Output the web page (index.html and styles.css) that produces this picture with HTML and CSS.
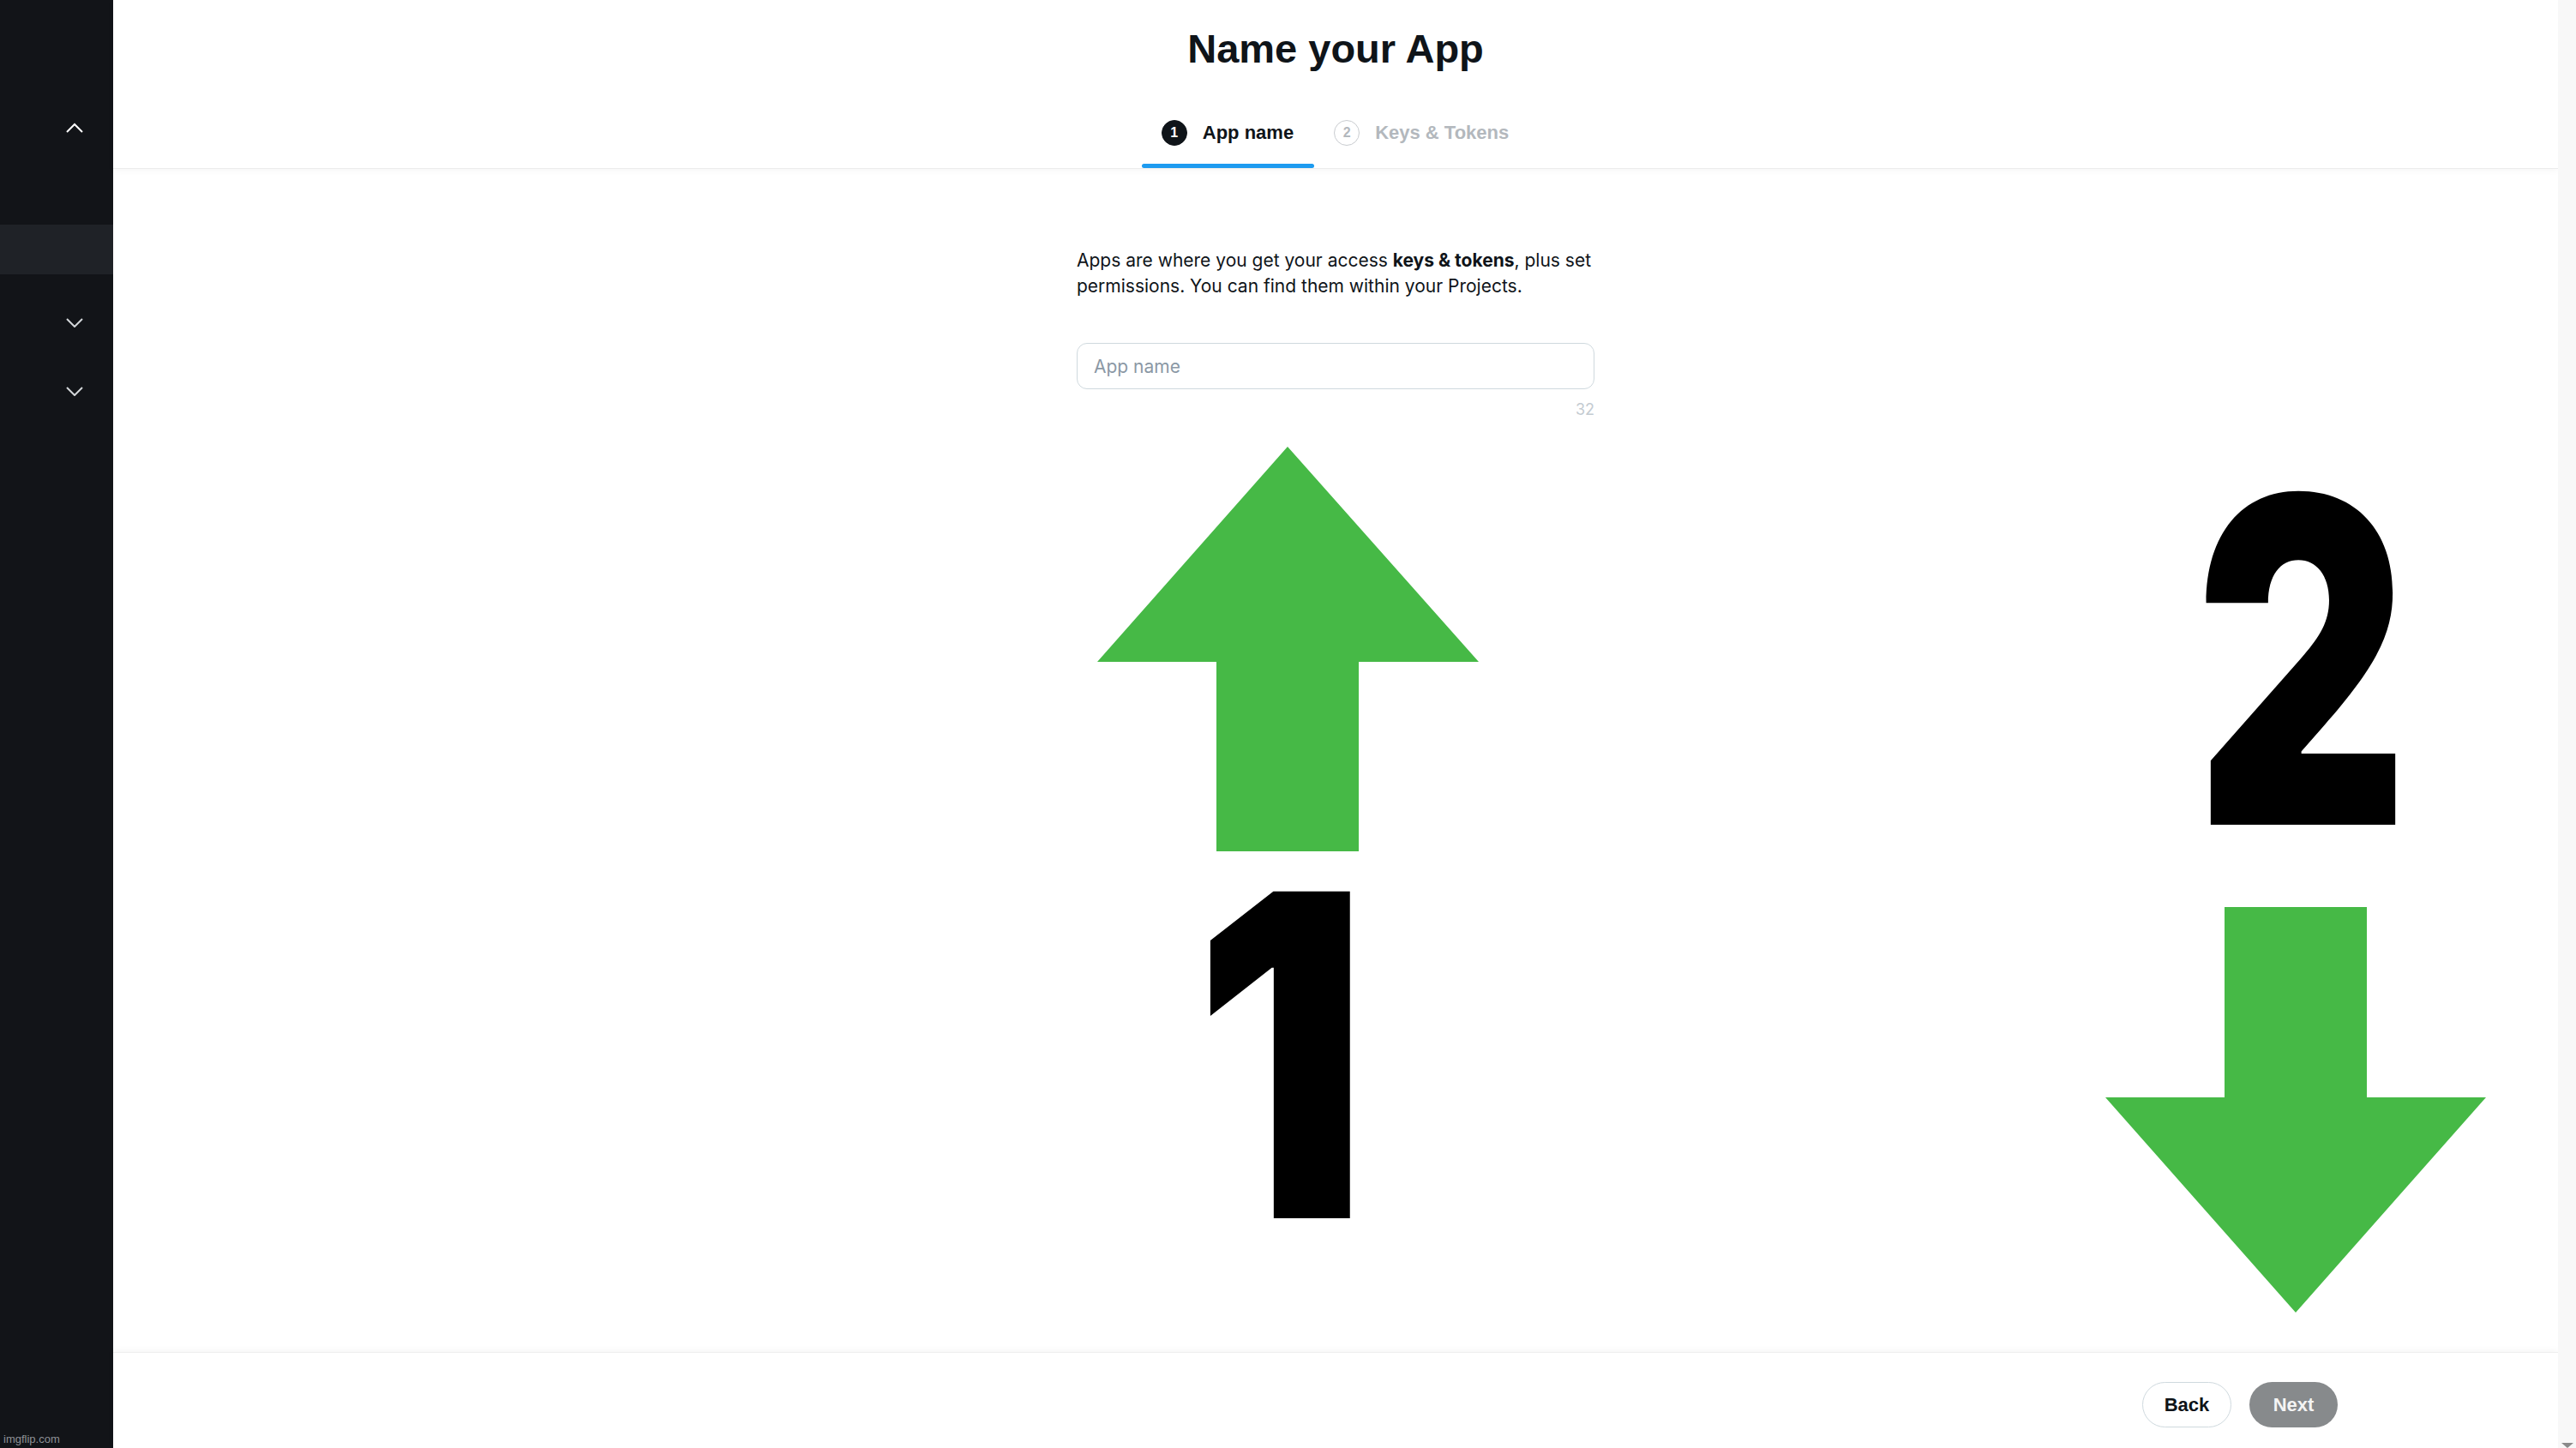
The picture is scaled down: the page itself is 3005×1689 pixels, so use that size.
FILE: index.html
```html
<!DOCTYPE html>
<html lang="en">
<head>
    <meta charset="UTF-8">
    <meta name="viewport" content="width=device-width, initial-scale=1.0">
    <title>Name your App</title>
    <link rel="stylesheet" href="styles.css">
</head>
<body>
    <aside class="sidebar">
        <div class="nav-item nav-item--first">
            <svg class="chevron" viewBox="0 0 22 12" width="22" height="12"><path d="M2 11 L11 2 L20 11"/></svg>
        </div>
        <div class="nav-item nav-item--active"></div>
        <div class="nav-item nav-item--third">
            <svg class="chevron chevron--down" viewBox="0 0 22 12" width="22" height="12"><path d="M2 2 L11 11 L20 2"/></svg>
        </div>
        <div class="nav-item nav-item--fourth">
            <svg class="chevron chevron--down" viewBox="0 0 22 12" width="22" height="12"><path d="M2 2 L11 11 L20 2"/></svg>
        </div>
        <div class="watermark">imgflip.com</div>
    </aside>

    <main class="main">
        <header class="topbar">
            <h1>Name your App</h1>
            <nav class="steps">
                <div class="step step--active">
                    <div class="step-body">
                        <span class="step-num">1</span>
                        <span class="step-label">App name</span>
                    </div>
                    <div class="step-bar"></div>
                </div>
                <div class="step">
                    <div class="step-body">
                        <span class="step-num">2</span>
                        <span class="step-label">Keys &amp; Tokens</span>
                    </div>
                    <div class="step-bar"></div>
                </div>
            </nav>
        </header>

        <section class="content">
            <p class="intro">Apps are where you get your access <b>keys &amp; tokens</b>, plus set<br>permissions. You can find them within your Projects.</p>
            <div class="field">
                <input type="text" placeholder="App name">
                <div class="counter">32</div>
            </div>
        </section>

        <footer class="footer">
            <button class="btn btn-back">Back</button>
            <button class="btn btn-next">Next</button>
        </footer>
    </main>

    <div class="scroll-track">
        <span class="scroll-arrow"></span>
    </div>

    <!-- meme overlay -->
    <svg class="arrow arrow--up" viewBox="0 0 445 472" width="445" height="472">
        <polygon points="222,0 445,251 305,251 305,472 139,472 139,251 0,251"/>
    </svg>
    <div class="digit digit--one">1</div>
    <div class="digit digit--two">2</div>
    <svg class="arrow arrow--down" viewBox="0 0 444 473" width="444" height="473">
        <polygon points="139,0 305,0 305,222 444,222 222,473 0,222 139,222"/>
    </svg>
</body>
</html>
```

FILE: styles.css
```css
body {
    margin: 0;
    height: 100vh;
    display: flex;
    overflow: hidden;
    position: relative;
    background: #fff;
    font-family: Inter, "Noto Sans", sans-serif;
    color: #0f1419;
}
.sidebar {
    width: 132px;
    flex: none;
    background-color: #121418;
    display: flex;
    flex-direction: column;
}
.nav-item {
    height: 58px;
    display: flex;
    align-items: center;
    justify-content: flex-end;
    padding-right: 34px;
}
.nav-item--first {
    margin-top: 120px;
}
.nav-item--active {
    margin-top: 84px;
    background-color: #1f2227;
}
.nav-item--third {
    margin-top: 27px;
}
.nav-item--fourth {
    margin-top: 22px;
}
.chevron path {
    fill: none;
    stroke: #fff;
    stroke-width: 2;
}
.chevron--down path {
    stroke: #d3d6d9;
}
.watermark {
    margin-top: auto;
    padding: 0 0 3px 4px;
    font: 13px "Liberation Sans", Arial, sans-serif;
    color: #8e9196;
}
.main {
    flex: 1;
    display: flex;
    flex-direction: column;
}
.topbar {
    height: 197px;
    box-sizing: border-box;
    border-bottom: 1px solid #ececec;
    box-shadow: 0 2px 8px rgba(0, 0, 0, 0.04);
    display: flex;
    flex-direction: column;
    align-items: center;
}
.topbar h1 {
    margin: 29px 0 0;
    font: 700 47px/56px "Liberation Sans", Arial, sans-serif;
    color: #0f1419;
}
.steps {
    display: flex;
    margin-top: 34px;
}
.step {
    display: flex;
    flex-direction: column;
}
.step-body {
    height: 72px;
    display: flex;
    align-items: center;
    gap: 18px;
    padding: 0 24px 0 23px;
}
.step-num {
    width: 30px;
    height: 30px;
    box-sizing: border-box;
    border-radius: 50%;
    border: 1.5px solid #c9ccd0;
    display: flex;
    align-items: center;
    justify-content: center;
    font: 700 16px "Liberation Sans", Arial, sans-serif;
    color: #b3b8bd;
}
.step-label {
    font: 700 22px "Liberation Sans", Arial, sans-serif;
    color: #b3b8bd;
}
.step-bar {
    height: 5px;
    border-radius: 3px;
}
.step--active .step-num {
    background-color: #0f1419;
    border-color: #0f1419;
    color: #fff;
}
.step--active .step-label {
    color: #0f1419;
}
.step--active .step-bar {
    background-color: #1d9bf0;
}
.content {
    flex: 1;
    display: flex;
    flex-direction: column;
    align-items: center;
}
.intro {
    width: 604px;
    margin: 92px 0 0;
    font-size: 21px;
    line-height: 30px;
    color: #0f1419;
}
.intro b {
    font-weight: 700;
}
.field {
    width: 604px;
    margin-top: 51px;
}
.field input {
    width: 100%;
    height: 54px;
    box-sizing: border-box;
    border: 1px solid #cfd9de;
    border-radius: 12px;
    padding: 0 19px;
    font: 21px Inter, sans-serif;
    color: #0f1419;
    outline: none;
}
.field input::placeholder {
    color: #8b98a5;
}
.counter {
    margin-top: 14px;
    text-align: right;
    font-size: 18px;
    line-height: 20px;
    color: #c4cbd1;
}
.footer {
    height: 112px;
    flex: none;
    box-sizing: border-box;
    border-top: 1px solid #efefef;
    box-shadow: 0 -2px 8px rgba(0, 0, 0, 0.04);
    display: flex;
    justify-content: flex-end;
    align-items: flex-start;
    gap: 21px;
    padding: 34px 257px 0 0;
}
.btn {
    height: 53px;
    border-radius: 27px;
    font: 700 22px "Liberation Sans", Arial, sans-serif;
    cursor: pointer;
}
.btn-back {
    width: 104px;
    background-color: #fff;
    border: 1px solid #cfd9de;
    color: #0f1419;
}
.btn-next {
    width: 103px;
    background-color: #878a8c;
    border: none;
    color: #f4f4f4;
}
.scroll-track {
    width: 21px;
    flex: none;
    background-color: #f8f8f8;
    display: flex;
    flex-direction: column;
    justify-content: flex-end;
    align-items: center;
}
.scroll-arrow {
    width: 0;
    height: 0;
    border-left: 7px solid transparent;
    border-right: 7px solid transparent;
    border-top: 6px solid #8a8a8a;
}
.arrow {
    position: absolute;
}
.arrow polygon {
    fill: #46b946;
}
.arrow--up {
    left: 1280px;
    top: 521px;
}
.arrow--down {
    left: 2456px;
    top: 1058px;
}
.digit {
    position: absolute;
    width: 400px;
    text-align: center;
    font-family: Inter, "DejaVu Sans", sans-serif;
    font-weight: 900;
    line-height: 1;
    color: #000;
}
.digit--one {
    left: 1294px;
    top: 968px;
    font-size: 524px;
    transform: scaleX(0.86);
}
.digit--two {
    left: 2485px;
    top: 506px;
    font-size: 528px;
    transform: scaleX(0.73);
}
```
